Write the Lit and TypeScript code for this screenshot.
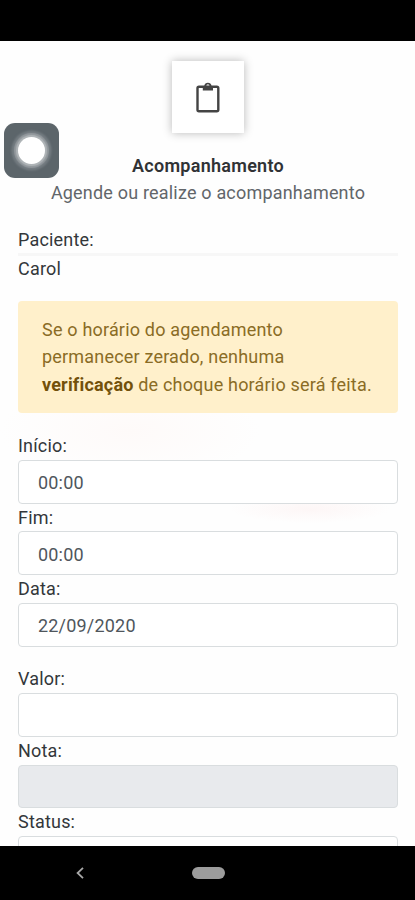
import { LitElement, html, css } from "lit";
import { customElement, property } from "lit/decorators.js";

@customElement("form-field")
class FormField extends LitElement {
  @property() label = "";
  @property() value = "";
  @property({ type: Boolean }) disabled = false;

  static styles = css`
    :host { display: block; height: 71.6px; }
    .label { display: block; height: 27.8px; line-height: 27.8px; color: #33373a; }
    .control {
      display: block; box-sizing: border-box; width: 100%; height: 43.8px;
      padding: 2px 19px 0; border: 1px solid #d9dddf; border-radius: 4px;
      background: #fff; color: #4f565c; font: inherit; letter-spacing: inherit; outline: none;
    }
    .control:disabled { background: #e8eaed; opacity: 1; }
  `;

  render() {
    return html`<label class="label" for="control">${this.label}</label>
      <input class="control" id="control" .value=${this.value} ?disabled=${this.disabled} />`;
  }
}

@customElement("app-root")
class AppRoot extends LitElement {
  static styles = css`
    :host {
      display: flex; flex-direction: column; position: relative; height: 900px; overflow: hidden;
      background: #fefefe; font-family: Roboto, sans-serif; font-size: 18px; letter-spacing: 0.19px;
      line-height: 27.7px; color: #33373a;
    }
    .status-bar { flex: none; height: 41px; background: #000; }
    .page {
      flex: 1; min-height: 0; overflow: hidden; padding: 20px 17px 0 18px;
      background:
        radial-gradient(ellipse 80px 14px at 310px 468px, #fdf6f6, transparent),
        radial-gradient(ellipse 130px 50px at 130px 390px, #fefaf9, transparent),
        #fefefe;
    }
    .header { display: flex; flex-direction: column; align-items: center; text-align: center; }
    .tile {
      display: flex; align-items: center; justify-content: center; width: 72px; height: 72px;
      background: #fff; box-shadow: 0 0 9px rgba(0, 0, 0, 0.28);
    }
    .clipboard { width: 24px; height: 32px; }
    .title { margin-top: 18.5px; font-weight: 600; letter-spacing: 0.27px; color: #303235; }
    .subtitle { color: #62666a; }
    .patient { margin-top: 19.4px; }
    .rule { height: 3px; margin-top: -1px; background: #f7f7f7; }
    .name { line-height: 25px; }
    .alert {
      margin: 20px 0 19px; padding: 14.5px 24px; border-radius: 4px; height: 83px;
      background: #fff0cb; color: #8a6c25;
    }
    .strong { font-weight: 700; color: #73510a; }
    .gap { height: 18.4px; }
    .nav {
      flex: none; height: 54px; background: #000; display: grid;
      grid-template-columns: 160px 96px 1fr; align-items: center; justify-items: center;
    }
    .back { width: 8px; height: 12px; }
    .home { width: 33px; height: 12px; border-radius: 6px; background: #9c9c9c; }
    .assist {
      position: absolute; left: 4px; top: 122.5px; width: 55px; height: 55px; border-radius: 11px;
      display: flex; align-items: center; justify-content: center; background: #5c656a;
    }
    .ring { width: 27px; height: 27px; border-radius: 50%; background: #fff;
      box-shadow: 0 0 1px 2px #b0b5b8, 0 0 1px 4px #92989c, 0 0 2px 6.5px #737b80; }
  `;

  render() {
    return html`
      <div class="status-bar"></div>
      <main class="page">
        <header class="header">
          <div class="tile">
            <svg class="clipboard" viewBox="0 0 24 32">
              <rect x="1.5" y="5.8" width="20.8" height="24.4" rx="1.5"
                fill="none" stroke="#444" stroke-width="2.4" />
              <path fill="#444" fill-rule="evenodd"
                d="M6.8 5H8.2a3.8 4.2 0 0 1 7.4 0H17V9.6H6.8ZM10.3 4.8a1.6 1.6 0 1 0 3.2 0a1.6 1.6 0 1 0-3.2 0Z" />
            </svg>
          </div>
          <div class="title">Acompanhamento</div>
          <div class="subtitle">Agende ou realize o acompanhamento</div>
        </header>
        <div class="patient">Paciente:</div>
        <div class="rule"></div>
        <div class="name">Carol</div>
        <div class="alert">
          Se o horário do agendamento<br />permanecer zerado, nenhuma<br />
          <span class="strong">verificação</span> de choque horário será feita.
        </div>
        <form-field label="Início:" value="00:00"></form-field>
        <form-field label="Fim:" value="00:00"></form-field>
        <form-field label="Data:" value="22/09/2020"></form-field>
        <div class="gap"></div>
        <form-field label="Valor:"></form-field>
        <form-field label="Nota:" disabled></form-field>
        <form-field label="Status:"></form-field>
      </main>
      <nav class="nav">
        <svg class="back" viewBox="0 0 8 12" fill="none" stroke="#a8a8a8" stroke-width="1.8">
          <path d="M7 .8L1.6 6L7 11.2" />
        </svg>
        <div class="home"></div>
      </nav>
      <div class="assist"><div class="ring"></div></div>
    `;
  }
}
